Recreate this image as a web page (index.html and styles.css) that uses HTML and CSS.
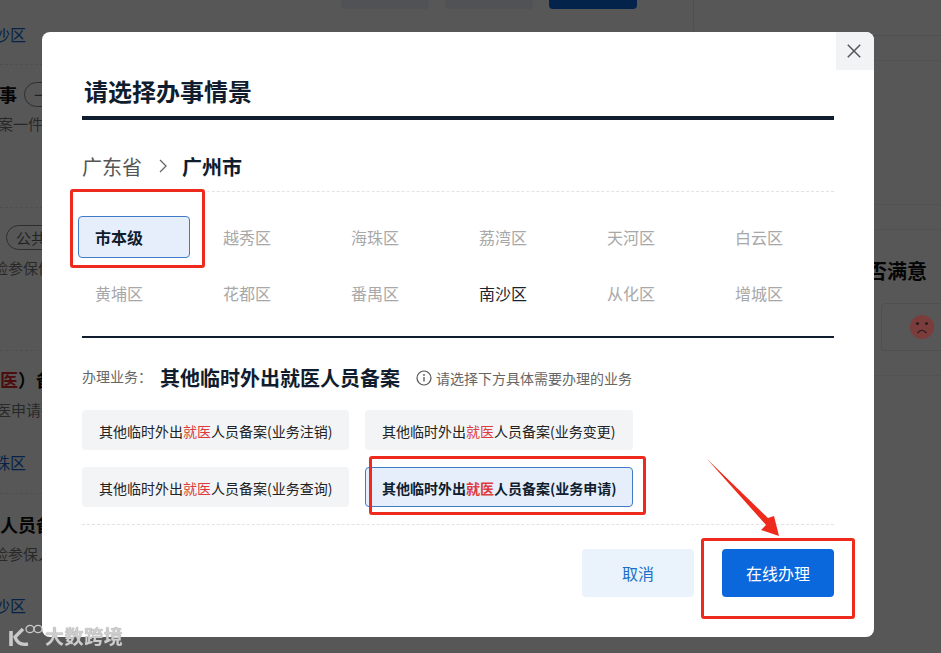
FILE: index.html
```html
<!DOCTYPE html>
<html lang="zh-CN">
<head>
<meta charset="utf-8">
<title>请选择办事情景</title>
<link rel="stylesheet" href="styles.css">
</head>
<body>
<div class="page">
  <main class="main">
    <div class="top-actions">
      <span class="top-btn"></span>
      <span class="top-btn"></span>
      <span class="top-btn top-btn-primary"></span>
    </div>
    <section class="block block-first">
      <a class="area-link area-first">南沙区</a>
    </section>
    <section class="block block-a">
      <div class="item-head">
        <span class="item-title title-shift-a">事</span>
        <span class="pill">一件事</span>
      </div>
      <p class="item-sub sub-a">备案一件事</p>
    </section>
    <section class="block block-b">
      <span class="pill pill-b">公共服务</span>
      <p class="item-sub sub-b">保险参保信息</p>
    </section>
    <section class="block block-c">
      <div class="item-title title-shift-c"><em class="item-red">就医</em>）备案</div>
      <p class="item-sub sub-c">就医申请确认</p>
      <a class="area-link area-c">海珠区</a>
    </section>
    <section class="block block-d">
      <div class="item-title">人员备案</div>
      <p class="item-sub sub-d">险参保人员</p>
      <a class="area-link area-d">南沙区</a>
    </section>
  </main>
  <aside class="side">
    <div class="side-card"></div>
    <div class="side-row"></div>
    <div class="side-tall"></div>
    <div class="side-row"></div>
    <div class="rate">
      <h3 class="rate-title">您是否满意</h3>
      <div class="rate-card">
        <svg class="sad" width="24" height="24" viewBox="0 0 24 24" aria-hidden="true">
          <circle cx="12" cy="12" r="12" fill="#7b3c3c"/>
          <circle cx="7.5" cy="8.5" r="1.6" fill="#2c1c1c"/>
          <circle cx="16.5" cy="8.5" r="1.6" fill="#2c1c1c"/>
          <path d="M7.5 18 Q12 12.5 16.5 18" fill="none" stroke="#2c1c1c" stroke-width="1.2"/>
        </svg>
      </div>
    </div>
  </aside>
</div>

<div class="overlay">
  <div class="modal">
    <button class="close" type="button" aria-label="关闭">
      <svg width="14" height="14" viewBox="0 0 14 14" aria-hidden="true">
        <path d="M.8 .8 13.2 13.2M13.2 .8 .8 13.2" fill="none" stroke="#50555a" stroke-width="1.5"/>
      </svg>
    </button>
    <h2 class="modal-title">请选择办事情景</h2>
    <div class="crumb">
      <span class="crumb-prov">广东省</span>
      <svg class="crumb-sep" width="8" height="14" viewBox="0 0 8 14" aria-hidden="true">
        <path d="M1 1 7 7 1 13" fill="none" stroke="#666" stroke-width="1.3"/>
      </svg>
      <strong class="crumb-city">广州市</strong>
    </div>
    <div class="districts">
      <span class="district is-selected">市本级</span>
      <span class="district">越秀区</span>
      <span class="district">海珠区</span>
      <span class="district">荔湾区</span>
      <span class="district">天河区</span>
      <span class="district">白云区</span>
      <span class="district">黄埔区</span>
      <span class="district">花都区</span>
      <span class="district">番禺区</span>
      <span class="district is-active">南沙区</span>
      <span class="district">从化区</span>
      <span class="district">增城区</span>
    </div>
    <div class="solid-rule"></div>
    <div class="biz-head">
      <span class="biz-label">办理业务：</span>
      <strong class="biz-name">其他临时外出就医人员备案</strong>
      <svg class="info" width="16" height="16" viewBox="0 0 16 16" aria-hidden="true">
        <circle cx="8" cy="8" r="7" fill="none" stroke="#555" stroke-width="1.2"/>
        <circle cx="8" cy="4.9" r=".9" fill="#555"/>
        <path d="M8 7v4.6" stroke="#555" stroke-width="1.3"/>
      </svg>
      <span class="biz-note">请选择下方具体需要办理的业务</span>
    </div>
    <div class="biz-grid">
      <button class="biz-btn" type="button">其他临时外出<em>就医</em>人员备案(业务注销)</button>
      <button class="biz-btn" type="button">其他临时外出<em>就医</em>人员备案(业务变更)</button>
      <button class="biz-btn" type="button">其他临时外出<em>就医</em>人员备案(业务查询)</button>
      <button class="biz-btn is-selected" type="button">其他临时外出<em>就医</em>人员备案(业务申请)</button>
    </div>
    <div class="actions">
      <button class="btn btn-cancel" type="button">取消</button>
      <button class="btn btn-primary" type="button">在线办理</button>
    </div>
  </div>
</div>

<div class="mark mark-1"></div>
<div class="mark mark-2"></div>
<div class="mark mark-3"></div>
<svg class="arrow" width="90" height="90" viewBox="0 0 90 90" aria-hidden="true">
  <polygon points="1,1 62,60 68,58 73,78 55,72 60,67" fill="#ee2a1c"/>
</svg>

<div class="watermark">
  <svg class="wm-logo" width="36" height="26" viewBox="0 0 36 26" aria-hidden="true">
    <path d="M3 8v15" fill="none" stroke="#c9c9c9" stroke-width="3.6"/>
    <path d="M15 6 7 14q3 9 13 7" fill="none" stroke="#c9c9c9" stroke-width="3.4"/>
    <ellipse cx="22" cy="6" rx="4" ry="3.6" fill="none" stroke="#c9c9c9" stroke-width="1.3"/>
    <ellipse cx="30" cy="6" rx="4" ry="3.6" fill="none" stroke="#c9c9c9" stroke-width="1.3"/>
  </svg>
  <span class="wm-text">大数跨境</span>
</div>
</body>
</html>
```
FILE: styles.css
```css
* { box-sizing: border-box; }
html, body {
  margin: 0;
  height: 100%;
  overflow: hidden;
  background: #fff;
}
body, button {
  font-family: "Noto Sans CJK SC", "Noto Sans", sans-serif;
}
em { font-style: normal; }
p, h2, h3 { margin: 0; }

/* dimmed page behind the dialog */
.page {
  display: flex;
  width: 941px;
  height: 653px;
  overflow: hidden;
}
.main { width: 693px; flex: none; }
.top-actions {
  display: flex;
  justify-content: flex-end;
  gap: 16px;
  height: 9px;
  padding-right: 56px;
}
.top-btn {
  width: 88px;
  background: #e9f1f8;
  border-radius: 0 0 4px 4px;
}
.top-btn-primary { background: #0a67dc; }

.block {
  height: 143px;
  border-bottom: 1px dashed #e8e8e8;
  white-space: nowrap;
}
.block-first { height: 56px; padding-top: 14px; }
.block-a { padding-top: 16px; }
.block-b { padding-top: 17px; }
.block-c { padding-top: 15px; }
.block-d { padding-top: 17px; border-bottom: 0; }

.area-link {
  display: block;
  font-size: 16px;
  line-height: 22px;
  color: #1268d0;
}
.area-first { margin-left: -22px; }
.area-c { margin: 31px 0 0 -22px; }
.area-d { margin: 30px 0 0 -22px; }

.item-head { display: flex; align-items: center; gap: 7px; height: 26px; }
.item-title {
  font-size: 18px;
  font-weight: 700;
  line-height: 26px;
  color: #111;
}
.item-red { color: #e0272c; }
.title-shift-a { margin-left: -1px; }
.title-shift-c { margin-left: -18px; }

.pill {
  display: inline-block;
  height: 25px;
  padding: 0 12px 0 9px;
  border: 1px solid #888;
  border-radius: 13px;
  font-size: 15px;
  line-height: 23px;
  color: #666;
}
.pill-b { margin-left: 6px; }

.item-sub {
  font-size: 15px;
  line-height: 20px;
  color: #777;
}
.sub-a { margin: 7px 0 0 -17px; }
.sub-b { margin: 8px 0 0 -22px; }
.sub-c { margin: 8px 0 0 -19px; }
.sub-d { margin: 7px 0 0 -7px; }

.side { flex: 1; }
.side-card {
  height: 36px;
  border-left: 1px solid #e8e8e8;
  border-bottom: 1px solid #e8e8e8;
  border-bottom-left-radius: 8px;
}
.side-row { height: 25px; border-bottom: 1px solid #f0f0f0; }
.side-tall { height: 144px; border-bottom: 1px solid #f0f0f0; }
.rate {
  height: 146px;
  padding: 26px 0 0 134px;
  border-bottom: 1px solid #f0f0f0;
  white-space: nowrap;
}
.rate-title {
  font-size: 20px;
  font-weight: 700;
  line-height: 30px;
  color: #111;
}
.rate-card {
  display: flex;
  align-items: center;
  width: 120px;
  height: 48px;
  margin: 17px 0 0 54px;
  padding-left: 28px;
  border: 1px solid #e8e8e8;
  border-radius: 4px;
}
.sad { position: relative; z-index: 2; }

/* dialog */
.overlay {
  position: fixed;
  inset: 0;
  z-index: 1;
  padding: 32px 0 0 42px;
  background: rgba(0, 0, 0, .66);
}
.modal {
  position: relative;
  width: 832px;
  height: 605px;
  padding: 43px 40px 0;
  background: #fff;
  border-radius: 8px;
}
.close {
  position: absolute;
  top: 0;
  right: 0;
  display: flex;
  align-items: center;
  justify-content: center;
  width: 38px;
  height: 38px;
  padding: 0 2px 0 0;
  border: 0;
  border-radius: 0 8px 0 0;
  background: #f2f3f5;
}
.modal-title {
  padding: 0 0 9px 2px;
  border-bottom: 4px solid #101d2e;
  font-size: 24px;
  font-weight: 700;
  line-height: 32px;
  color: #101d2e;
}
.crumb {
  display: flex;
  align-items: center;
  height: 39px;
  margin-top: 33px;
  padding-bottom: 12px;
  border-bottom: 1px dashed #e3e3e3;
  font-size: 20px;
}
.crumb-prov { color: #555; }
.crumb-sep { margin: 0 15px 0 17px; }
.crumb-city { font-weight: 700; color: #101d2e; }

.districts {
  display: grid;
  grid-template-columns: repeat(6, 112px);
  grid-auto-rows: 42px;
  gap: 14px 16px;
  margin: 24px 0 0 -4px;
}
.district {
  display: flex;
  align-items: center;
  padding-left: 16px;
  border: 1px solid transparent;
  border-radius: 4px;
  font-size: 16px;
  color: #a8a8a8;
}
.district.is-selected {
  background: #e6eefb;
  border-color: #3f7cc8;
  font-weight: 700;
  color: #101d2e;
}
.district.is-active { color: #1a2430; }

.solid-rule { height: 2px; margin-top: 22px; background: #101d2e; }

.biz-head {
  display: flex;
  align-items: center;
  height: 28px;
  margin-top: 25px;
}
.biz-label { width: 78px; padding-bottom: 2px; font-size: 14px; color: #666; }
.biz-name { font-size: 20px; font-weight: 700; color: #101d2e; }
.info { margin: 2px 4px 0 16px; }
.biz-note { font-size: 14px; color: #666; padding-top: 2px; }

.biz-grid {
  display: grid;
  grid-template-columns: 267px 268px;
  grid-auto-rows: 40px;
  gap: 17px 16px;
  justify-content: start;
  margin-top: 19px;
  padding-bottom: 17px;
  border-bottom: 1px dashed #e3e3e3;
}
.biz-btn {
  padding: 2px 0 0 16px;
  border: 1px solid transparent;
  border-radius: 4px;
  background: #f3f4f6;
  font-size: 14px;
  text-align: left;
  white-space: nowrap;
  color: #222;
}
.biz-btn em { color: #dc3c40; }
.biz-btn.is-selected {
  background: #e6eefb;
  border-color: #3f7cc8;
  font-weight: 700;
  color: #101d2e;
}

.actions {
  display: flex;
  justify-content: flex-end;
  gap: 28px;
  margin-top: 24px;
}
.btn {
  width: 112px;
  height: 48px;
  padding: 0;
  border: 0;
  border-radius: 4px;
  font-size: 16px;
}
.btn-cancel { background: #eaf3fb; color: #1a6fc9; }
.btn-primary { background: #0a67dc; color: #fff; }

/* red annotations drawn on top of the screenshot */
.mark {
  position: fixed;
  z-index: 3;
  border: 3px solid #ee2a1c;
  border-radius: 3px;
}
.mark-1 { left: 70px; top: 189px; width: 135px; height: 79px; }
.mark-2 { left: 369px; top: 456px; width: 277px; height: 59px; }
.mark-3 { left: 701px; top: 538px; width: 154px; height: 81px; }
.arrow { position: fixed; z-index: 3; left: 706px; top: 458px; }

/* watermark */
.watermark {
  position: fixed;
  z-index: 4;
  left: 8px;
  top: 623px;
  display: flex;
  align-items: center;
  height: 26px;
}
.wm-logo { flex: none; }
.wm-text {
  margin-left: 1px;
  font-size: 19px;
  font-weight: 700;
  letter-spacing: .6px;
  line-height: 26px;
  color: #cdcdcd;
  text-shadow: 0 0 1px #888;
}
```
